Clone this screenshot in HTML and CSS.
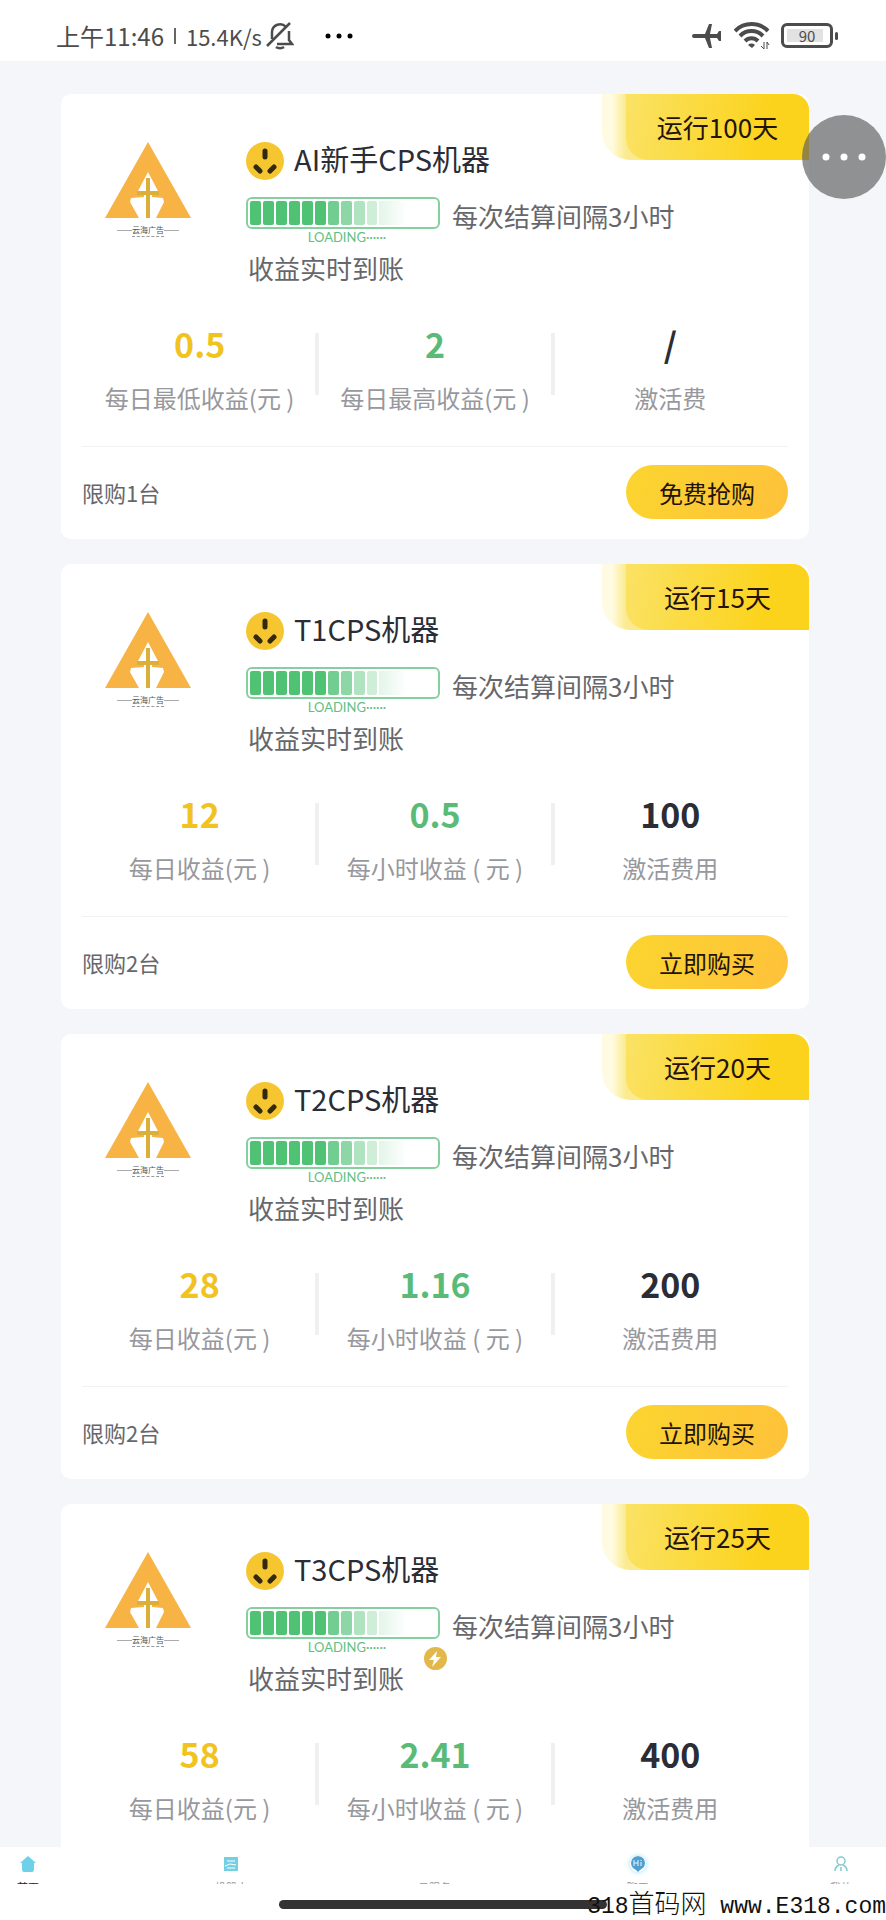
FILE: index.html
```html
<!DOCTYPE html>
<html lang="zh-CN">
<head>
<meta charset="utf-8">
<meta name="viewport" content="width=device-width, initial-scale=1">
<title>CPS机器</title>
<link rel="stylesheet" href="styles.css">
</head>
<body>
<svg class="defs" aria-hidden="true">
  <defs>
    <linearGradient id="fade" x1="0" x2="1" y1="0" y2="0">
      <stop offset="0" stop-color="#4fc274" stop-opacity=".16"/>
      <stop offset="1" stop-color="#4fc274" stop-opacity="0"/>
    </linearGradient>
    <symbol id="logo" viewBox="0 0 88 76">
      <path fill="#f8b345" d="M44 0 87 76H52L60 60 59 56 48 55V51H55L44 30 33 51H40V55L27 56 26 60 35 76H1Z"/>
      <path fill="#dcae3a" d="M42 36h4v13h9v4h-9v23h-4V53h-9v-4h9z"/>
    </symbol>
    <symbol id="socket" viewBox="0 0 38 38">
      <circle cx="19" cy="19" r="19" fill="#f6c631"/>
      <g stroke="#33290f" stroke-width="5" stroke-linecap="round">
        <path d="M19 9v6M10 25l4 4M28 25l-4 4"/>
      </g>
    </symbol>
    <symbol id="loadbar" viewBox="0 0 194 32">
      <rect x="1" y="1" width="192" height="30" rx="5" fill="#fff" stroke="#86cfa0" stroke-width="2"/>
      <g fill="#4fc274">
        <rect x="4" y="4" width="11" height="24" rx="2"/><rect x="17" y="4" width="11" height="24" rx="2"/>
        <rect x="30" y="4" width="11" height="24" rx="2"/><rect x="43" y="4" width="11" height="24" rx="2"/>
        <rect x="56" y="4" width="11" height="24" rx="2"/><rect x="69" y="4" width="11" height="24" rx="2"/>
        <rect x="82" y="4" width="11" height="24" rx="2" opacity=".8"/><rect x="95" y="4" width="11" height="24" rx="2" opacity=".65"/>
        <rect x="108" y="4" width="11" height="24" rx="2" opacity=".45"/><rect x="121" y="4" width="10" height="24" rx="2" opacity=".28"/>
      </g>
      <rect x="133" y="4" width="28" height="24" fill="url(#fade)"/>
    </symbol>
  </defs>
</svg>

<header class="status">
  <div class="status-left">
    <span class="clock">上午11:46</span>
    <span class="bar"></span>
    <span class="speed">15.4K/s</span>
    <svg class="bell" viewBox="0 0 28 28" fill="none" stroke="#4c4c4c" stroke-width="2.5">
      <path d="M6 17V10a8 8 0 0 1 14-5M23 9v9l3 4H11"/><path d="M1 24 24 1"/><path d="M10 25a5 3 0 0 0 8 0"/>
    </svg>
    <svg class="more" viewBox="0 0 30 6"><circle cx="4" cy="3" r="2.5"/><circle cx="15" cy="3" r="2.5"/><circle cx="26" cy="3" r="2.5"/></svg>
  </div>
  <div class="status-right">
    <svg class="plane" viewBox="0 0 30 26" fill="#4c4c4c"><path d="M2 11h11L17 1h3L18 11h7l2-3h2v10h-2l-2-3h-7l2 10h-3L13 15H2a2 2 0 0 1 0-4Z"/></svg>
    <svg class="wifi" viewBox="0 0 36 28" fill="none" stroke="#4c4c4c" stroke-width="4">
      <path d="M1 9a23 23 0 0 1 33 0M6 14a16 16 0 0 1 23 0M11 19a9 9 0 0 1 13 0"/>
      <path fill="#4c4c4c" stroke="none" d="M14 23a5 5 0 0 1 7 0l-3 3z"/>
      <path stroke-width="1" d="M30 20v7l-3-3M33 27v-7l2 3"/>
    </svg>
    <div class="battery"><span class="battery-level">90</span></div>
  </div>
</header>

<main class="list" id="list"></main>

<button class="float" type="button" aria-label="更多">
  <svg viewBox="0 0 44 8" fill="#fff"><circle cx="4" cy="4" r="3.5"/><circle cx="22" cy="4" r="3.5"/><circle cx="40" cy="4" r="3.5"/></svg>
</button>

<footer class="bottom">
  <nav class="tabs">
    <a class="tab tab-on" href="#home"><svg viewBox="0 0 16 16"><path fill="#6fd0ea" d="M8 0 16 7h-2v7q0 2-2 2H4q-2 0-2-2V7H0z"/></svg><span>首页</span></a>
    <a class="tab" href="#task"><svg viewBox="0 0 16 16"><path fill="#74d0e0" d="M1 1h14v14H1z"/><path stroke="#fff" d="M4 5h8M4 12h8M2 10l5-2 6 1" fill="none"/></svg><span>机器人</span></a>
    <a class="tab" href="#shop"><i class="tab-blank"></i><span>云服务</span></a>
    <a class="tab" href="#chat"><svg class="glow" viewBox="0 0 16 16"><circle cx="8" cy="7" r="7" fill="#4f9fd0"/><path fill="#4f9fd0" d="M5 13h6l-3 3z"/><path stroke="#e6f7ff" fill="none" d="M4 4v6M8 4v6M4 7h4M11 6v4M11 4v1"/></svg><span>聊天</span></a>
    <a class="tab" href="#mine"><svg viewBox="0 0 16 16" fill="none" stroke="#83c8cf" stroke-width="1.5"><circle cx="8" cy="5" r="4"/><path d="M2 15q0-4 4-6M14 15q0-4-4-6M8 11v4"/></svg><span>我的</span></a>
  </nav>
  <div class="home-bar"></div>
  <p class="watermark">318<span>首码网</span> www.E318.com</p>
</footer>
<script src="app.js"></script>
</body>
</html>
```
FILE: styles.css
```css
* { box-sizing: border-box; }
body {
  margin: 0;
  height: 100vh;
  display: flex;
  flex-direction: column;
  overflow: hidden;
  background: #f4f6f9;
  color: #2b2d36;
  font-family: "Noto Sans CJK SC", sans-serif;
}
.defs { position: absolute; width: 0; height: 0; }

.status {
  flex: none;
  height: 61px;
  padding: 10px 53px 0 56px;
  display: flex;
  align-items: center;
  justify-content: space-between;
  background: #fff;
  color: #4c4c4c;
}
.status-left, .status-right { display: flex; align-items: center; height: 100%; }
.clock { font-size: 24px; }
.bar { width: 2px; height: 16px; margin: 0 10px; background: #666; }
.speed { font-size: 22px; }
.bell { width: 28px; height: 28px; margin-left: 4px; }
.more { width: 30px; height: 6px; margin-left: 30px; }
.plane { width: 30px; height: 26px; }
.wifi { width: 36px; height: 28px; margin: 0 11px 0 12px; }
.battery {
  position: relative;
  width: 52px;
  height: 25px;
  padding: 3px;
  border: 3px solid #4c4c4c;
  border-radius: 6px;
}
.battery::after {
  content: "";
  position: absolute;
  right: -8px;
  top: 6px;
  width: 3px;
  height: 8px;
  border-radius: 2px;
  background: #4c4c4c;
}
.battery-level {
  display: block;
  height: 13px;
  background: linear-gradient(90deg, #e2e2e2 90%, #fff 90%);
  font-size: 15px;
  line-height: 13px;
  text-align: center;
}

.list {
  flex: 1;
  min-height: 0;
  overflow: hidden;
  display: flex;
  flex-direction: column;
  gap: 25px;
  padding: 33px 77px 0 61px;
}
.card {
  position: relative;
  flex: none;
  padding: 48px 21px 20px;
  border-radius: 10px;
  background: #fff;
}
.badge {
  position: absolute;
  top: 0;
  right: 0;
  padding-left: 24px;
  border-radius: 0 16px 0 28px;
  overflow: hidden;
  background: linear-gradient(90deg, #fffbe2 0 10px, #fdf2b0 18px, #fbea90 24px);
}
.badge-text {
  display: block;
  width: 183px;
  border-radius: 0 0 0 22px;
  background: linear-gradient(100deg, #fae265, #fcd31c 75%);
  color: #23130a;
  font-size: 26px;
  line-height: 66px;
  text-align: center;
}
.top { display: flex; gap: 54px; padding-left: 22px; }
.brand { width: 88px; display: flex; flex-direction: column; align-items: center; }
.brand-mark { width: 88px; height: 76px; }
.brand-name {
  display: flex;
  align-items: center;
  margin-top: 6px;
  color: #555;
  font-size: 8px;
  line-height: 12px;
}
.brand-name::before, .brand-name::after { content: ""; width: 15px; height: 1px; background: #aaa; }
.brand-sub { width: 32px; border-top: 1px dashed #999; }
.title { display: flex; align-items: flex-start; gap: 10px; height: 40px; color: #2b2d36; }
.title svg { width: 38px; height: 38px; }
.title h2 { margin: 0; font-size: 29px; font-weight: 400; line-height: 32px; }
.info { color: #66676c; font-size: 26px; }
.run { display: flex; gap: 12px; margin-top: 15px; }
.loading { position: relative; width: 194px; }
.loading svg { display: block; width: 194px; height: 32px; }
.loading-text {
  display: block;
  padding-left: 8px;
  color: #62bf83;
  font-family: Lato, sans-serif;
  font-size: 13px;
  line-height: 17px;
  text-align: center;
}
.run-text { line-height: 38px; }
.settle { margin: 0; padding-left: 2px; line-height: 44px; }
.loading .bolt { position: absolute; right: -7px; bottom: -14px; width: 23px; height: 23px; }

.stats { display: grid; grid-template-columns: repeat(3, 1fr); margin: 30px 0 0; }
.stat {
  position: relative;
  display: flex;
  flex-direction: column-reverse;
  gap: 14px;
  text-align: center;
}
.stat + .stat::before {
  content: "";
  position: absolute;
  left: -2px;
  top: 13px;
  width: 4px;
  height: 62px;
  background: #f0f0f2;
}
.stat dd { margin: 0; font-size: 34px; font-weight: 700; line-height: 48px; }
.stat dt { color: #97989d; font-size: 24px; line-height: 32px; white-space: pre; }
.gold { color: #f1c321; }
.green { color: #5abb78; }
.foot {
  display: flex;
  align-items: center;
  justify-content: space-between;
  margin-top: 32px;
  padding-top: 18px;
  border-top: 1px solid #f2f2f4;
}
.limit { color: #66676c; font-size: 22px; }
.buy {
  width: 162px;
  height: 54px;
  padding: 0;
  border: 0;
  border-radius: 27px;
  background: linear-gradient(110deg, #fbd52f, #fec13b);
  color: #23130a;
  font: 24px "Noto Sans CJK SC", sans-serif;
}

.float {
  position: absolute;
  top: 115px;
  right: 0;
  width: 84px;
  height: 84px;
  padding: 0 20px;
  border: 0;
  border-radius: 50%;
  background: rgba(90, 90, 90, .65);
}
.float svg { display: block; width: 44px; }

.bottom { position: relative; flex: none; height: 73px; background: #fff; }
.tabs { display: flex; justify-content: space-between; padding: 9px 27px 0 10px; }
.tab {
  width: 36px;
  display: flex;
  flex-direction: column;
  align-items: center;
  color: #999;
  font-size: 11px;
  line-height: 14px;
  text-decoration: none;
}
.tab svg, .tab-blank { width: 16px; height: 16px; }
.glow { border-radius: 50%; box-shadow: 0 0 4px 1px #b9e8f8; }
.tab span { height: 4px; margin-top: 8px; overflow: hidden; white-space: nowrap; }
.tab-on { color: #222; }
.home-bar {
  width: 37%;
  height: 9px;
  margin: 16px auto 0;
  border-radius: 5px;
  background: #333;
}
.watermark {
  position: absolute;
  right: 0;
  bottom: 0;
  margin: 0;
  color: #111;
  font-family: "Liberation Mono", monospace;
  font-size: 23px;
  line-height: 26px;
  white-space: nowrap;
}
.watermark span { font-family: "Noto Sans CJK SC", sans-serif; font-size: 26px; font-weight: 300; }
```
FILE: app.js
```js
const machines = [
  { name: "AI新手CPS机器", days: 100, limit: 1, action: "免费抢购",
    stats: [["0.5", "每日最低收益(元 )"], ["2", "每日最高收益(元 )"], ["/", "激活费"]] },
  { name: "T1CPS机器", days: 15, limit: 2, action: "立即购买",
    stats: [["12", "每日收益(元 )"], ["0.5", "每小时收益 ( 元 )"], ["100", "激活费用"]] },
  { name: "T2CPS机器", days: 20, limit: 2, action: "立即购买",
    stats: [["28", "每日收益(元 )"], ["1.16", "每小时收益 ( 元 )"], ["200", "激活费用"]] },
  { name: "T3CPS机器", days: 25, limit: 2, action: "立即购买", bolt: true,
    stats: [["58", "每日收益(元 )"], ["2.41", "每小时收益 ( 元 )"], ["400", "激活费用"]] }
];
const tones = ["gold", "green", "dark"];
const bolt = `<svg class="bolt" viewBox="0 0 23 23"><circle cx="11.5" cy="11.5" r="11.5" fill="#e2b84a"/><path fill="#fff" d="M13 4 5 13h5l-2 7 9-10h-5z"/></svg>`;

document.getElementById("list").innerHTML = machines.map(m => `
  <article class="card">
    <div class="badge"><span class="badge-text">运行${m.days}天</span></div>
    <div class="top">
      <div class="brand">
        <svg class="brand-mark"><use href="#logo"/></svg>
        <span class="brand-name">云海广告</span>
        <span class="brand-sub"></span>
      </div>
      <div class="info">
        <div class="title"><svg><use href="#socket"/></svg><h2>${m.name}</h2></div>
        <div class="run">
          <div class="loading"><svg><use href="#loadbar"/></svg><span class="loading-text">LOADING······</span>${m.bolt ? bolt : ""}</div>
          <span class="run-text">每次结算间隔3小时</span>
        </div>
        <p class="settle">收益实时到账</p>
      </div>
    </div>
    <dl class="stats">
      ${m.stats.map(([v, l], i) => `<div class="stat"><dt>${l}</dt><dd class="${tones[i]}">${v}</dd></div>`).join("")}
    </dl>
    <div class="foot"><span class="limit">限购${m.limit}台</span><button class="buy" type="button">${m.action}</button></div>
  </article>`).join("");
```
